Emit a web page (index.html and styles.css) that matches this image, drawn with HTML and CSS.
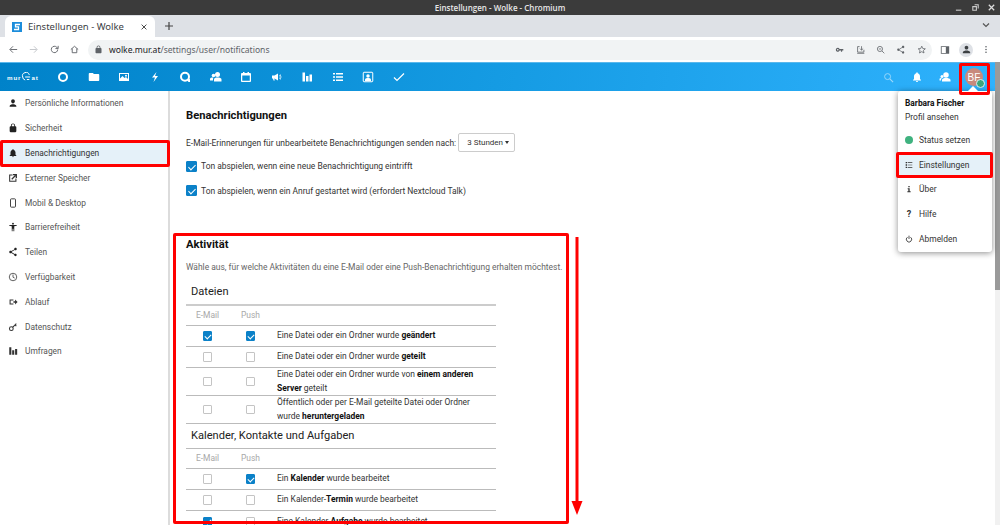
FILE: index.html
```html
<!DOCTYPE html>
<html lang="de">
<head>
<meta charset="utf-8">
<title>Einstellungen - Wolke - Chromium</title>
<link rel="stylesheet" href="styles.css">
</head>
<body>
<div class="window">
  <div class="titlebar">
    <span class="titlebar-text">Einstellungen - Wolke - Chromium</span>
    <div class="winctl">
      <svg viewBox="0 0 10 10"><path d="M1 8h6" stroke="#bbb" stroke-width="1.4"/></svg>
      <svg viewBox="0 0 10 10"><path d="M2 4h4v4H2zM4 2h4v4" fill="none" stroke="#ccc" stroke-width="1.2"/></svg>
      <svg viewBox="0 0 10 10"><path d="M2 2l6 6M8 2l-6 6" stroke="#ddd" stroke-width="1.4"/></svg>
    </div>
  </div>
  <div class="tabstrip">
    <div class="tab">
      <svg class="favicon" viewBox="0 0 10 10"><rect width="10" height="10" fill="#1c8ddb"/><path d="M8 2.500H3.500v2.400h3v2.600H2" fill="none" stroke="#fff" stroke-width="1.300"/></svg>
      <span class="tab-title">Einstellungen - Wolke</span>
      <svg class="tab-close" viewBox="0 0 10 10"><path d="M2 2l6 6M8 2l-6 6" stroke="#444" stroke-width="1.200"/></svg>
    </div>
    <svg class="newtab" viewBox="0 0 10 10"><path d="M5 1v8M1 5h8" stroke="#444" stroke-width="1.200"/></svg>
    <svg class="tabmenu" viewBox="0 0 10 10"><path d="M2 3.500l3 3 3-3" fill="none" stroke="#555" stroke-width="1.200"/></svg>
  </div>
  <div class="toolbar">
    <div class="navbtns">
      <svg viewBox="0 0 24 24"><path d="M20 12H5M11 5l-7 7 7 7" fill="none" stroke="#5f6368" stroke-width="2"/></svg>
      <svg viewBox="0 0 24 24"><path d="M4 12h15M13 5l7 7-7 7" fill="none" stroke="#c0c3c7" stroke-width="2"/></svg>
      <svg viewBox="0 0 24 24"><path d="M19 12a7 7 0 1 1-2-5l2 2M20 4v6h-6" fill="none" stroke="#5f6368" stroke-width="2"/></svg>
      <svg viewBox="0 0 24 24"><path d="M4 12l8-7 8 7M7 10v9h10v-9" fill="none" stroke="#5f6368" stroke-width="2"/></svg>
    </div>
    <div class="omnibox">
      <svg class="lock" viewBox="0 0 24 24"><path fill="#5f6368" d="M18 8h-1V6c0-2.800-2.200-5-5-5S7 3.200 7 6v2H6c-1.100 0-2 .9-2 2v10c0 1.100.9 2 2 2h12c1.100 0 2-.9 2-2V10c0-1.100-.9-2-2-2zM9 6c0-1.700 1.300-3 3-3s3 1.300 3 3v2H9V6z"/></svg>
      <span class="url"><span class="url-host">wolke.mur.at</span>/settings/user/notifications</span>
      <div class="omni-icons">
        <svg viewBox="0 0 24 24"><path fill="#5f6368" d="M7 7a5 5 0 1 0 4.600 7H15v3h3v-3h3v-4h-9.400A5 5 0 0 0 7 7zm0 3a2 2 0 1 1 0 4 2 2 0 0 1 0-4z"/></svg>
        <svg viewBox="0 0 24 24"><path fill="none" stroke="#5f6368" stroke-width="2" d="M9 4H4v14h16v-6M14 3v10M10 9l4 4 4-4M3 21h18"/></svg>
        <svg viewBox="0 0 24 24"><circle cx="10" cy="10" r="6.500" fill="none" stroke="#5f6368" stroke-width="2"/><path d="M15 15l6 6M7 10h6" stroke="#5f6368" stroke-width="2"/></svg>
        <svg viewBox="0 0 24 24"><path fill="#5f6368" d="M18 16.100c-.8 0-1.400.3-2 .8l-7.100-4.200c.1-.2.1-.5.1-.7s0-.5-.1-.7L16 7.100c.5.5 1.200.9 2 .9 1.700 0 3-1.300 3-3s-1.300-3-3-3-3 1.300-3 3c0 .2 0 .5.1.7L8 9.800C7.500 9.300 6.800 9 6 9c-1.700 0-3 1.300-3 3s1.300 3 3 3c.8 0 1.500-.3 2-.8l7.100 4.200c-.1.200-.1.400-.1.600 0 1.600 1.300 2.900 2.900 2.900s2.900-1.300 2.900-2.900-1.200-2.900-2.900-2.900z"/></svg>
        <svg viewBox="0 0 24 24"><path fill="none" stroke="#5f6368" stroke-width="2" d="M12 3l2.700 6 6.300.6-4.800 4.200 1.500 6.400L12 16.800l-5.700 3.400 1.500-6.400L3 9.600 9.300 9z"/></svg>
      </div>
    </div>
    <div class="chrome-right">
      <svg class="panel" viewBox="0 0 24 24"><path fill="#5f6368" fill-rule="evenodd" d="M2 3h20v18H2zm2 2v14h10V5z"/></svg>
      <span class="profile"><svg viewBox="0 0 24 24"><path fill="#3c4043" d="M12 12c2.200 0 4-1.800 4-4s-1.800-4-4-4-4 1.800-4 4 1.800 4 4 4zm0 2c-2.700 0-8 1.300-8 4v2h16v-2c0-2.700-5.300-4-8-4z"/></svg></span>
      <svg class="kebab" viewBox="0 0 10 24"><circle cx="5" cy="5" r="2" fill="#5f6368"/><circle cx="5" cy="12" r="2" fill="#5f6368"/><circle cx="5" cy="19" r="2" fill="#5f6368"/></svg>
    </div>
  </div>
  <div class="page">
    <div class="page-main">
      <header class="appheader">
        <div class="logo"><span>mur</span><svg viewBox="0 0 12 10"><path d="M10 2.500A4 4 0 0 0 2 5a4 4 0 0 0 3 3.600M5 5h6M7 8h3" fill="none" stroke="#fff" stroke-width="1.200"/></svg><span>at</span></div>
        <nav class="appnav">
          <svg viewBox="0 0 24 24"><circle cx="12" cy="12" r="8" fill="none" stroke="#fff" stroke-width="4"/></svg>
          <svg viewBox="0 0 24 24"><path fill="#fff" d="M10 4H3c-1 0-1.500.9-1.500 2v12c0 1.100.9 2 2 2h17c1.100 0 2-.9 2-2V8c0-1.100-.9-2-2-2h-9z"/></svg>
          <svg viewBox="0 0 24 24"><path fill="#fff" fill-rule="evenodd" d="M2 4h20v16H2zm2 2v9l5-5 4 4 3-2 4 4V6zm12 1.500a2 2 0 1 1 0 4 2 2 0 0 1 0-4z"/></svg>
          <svg viewBox="0 0 24 24"><path fill="#fff" d="M15 2L6 13h6l-3 9 9-12h-6l3-8z"/></svg>
          <svg viewBox="0 0 24 24"><circle cx="12" cy="11.500" r="8" fill="none" stroke="#fff" stroke-width="4"/><path fill="#fff" d="M15 17l7-1v6h-3z"/></svg>
          <svg viewBox="0 0 24 24"><circle cx="15" cy="7" r="5" fill="#fff"/><circle cx="7" cy="9" r="3.600" fill="#fff"/><path fill="#fff" d="M8 21v-4c0-3 3-4 7-4s8 1 8 4v4zM0 19v-3c0-2.400 3-3 6-3l1 1c-1 .6-1 2-1 5z"/></svg>
          <svg viewBox="0 0 24 24"><path fill="#fff" fill-rule="evenodd" d="M6 2h3v2h6V2h3v2h2c1 0 2 1 2 2v14c0 1-1 2-2 2H4c-1 0-2-1-2-2V6c0-1 1-2 2-2h2zM4.500 9v10.500h15V9z"/></svg>
          <svg viewBox="0 0 24 24"><path fill="#fff" d="M2 9h5l7-4v14l-7-4H6.500l1 4H5l-1-4H2zM17 8l3-1v2l-3 1zM17 11h4v2h-4zM17 14l3 1v2l-3-1z"/></svg>
          <svg viewBox="0 0 24 24"><path fill="#fff" d="M3 3h5v18H3zM10 10h5v11h-5zM17 7h5v14h-5z"/></svg>
          <svg viewBox="0 0 24 24"><path fill="#fff" d="M2 4h4v3H2zM8 4h14v3H8zM2 10.500h4v3H2zM8 10.500h14v3H8zM2 17h4v3H2zM8 17h14v3H8z"/></svg>
          <svg viewBox="0 0 24 24"><path fill="none" stroke="#fff" stroke-width="2" d="M4 2.500h16c1 0 1.500.5 1.500 1.500v16c0 1-.5 1.500-1.500 1.500H4c-1 0-1.500-.5-1.500-1.500V4c0-1 .5-1.500 1.500-1.500z"/><circle cx="12" cy="10" r="3.500" fill="#fff"/><path fill="#fff" d="M6 20v-3c0-2 3-3 6-3s6 1 6 3v3z"/></svg>
          <svg viewBox="0 0 24 24"><path fill="none" stroke="#fff" stroke-width="2.400" d="M2 13l6 6L22 5"/></svg>
        </nav>
        <div class="appnav-right">
          <svg class="dim" viewBox="0 0 24 24"><circle cx="10" cy="10" r="6.500" fill="none" stroke="#fff" stroke-width="2"/><path d="M15 15l7 7" stroke="#fff" stroke-width="2.500"/></svg>
          <svg class="bell" viewBox="0 0 24 24"><path fill="#fff" d="M12 22c1.100 0 2-.9 2-2h-4c0 1.100.9 2 2 2zm6-6v-5c0-3.100-1.600-5.600-4.500-6.300V4c0-.8-.7-1.500-1.500-1.500s-1.500.7-1.500 1.500v.7C7.600 5.400 6 7.900 6 11v5l-2 2v1h16v-1l-2-2z"/></svg>
          <svg class="people" viewBox="0 0 24 24"><circle cx="14" cy="8" r="5.500" fill="#fff"/><circle cx="6" cy="11" r="3" fill="#fff"/><path fill="#fff" d="M6 21v-3c0-3 4-4 8-4s9 1 9 4v3zM1 19v-3c0-1.500 2-2 5-2-1.500 1-2 2.500-2 5z"/></svg>
          <div class="avatar">BF<span class="avatar-status"></span></div>
        </div>
      </header>
      <div class="appbody">
        <aside class="sidebar">
          <a class="side-item"><svg viewBox="0 0 24 24"><path fill="#222" d="M12 13c2.500 0 4.500-2.200 4.500-5S14.500 3 12 3 7.500 5.200 7.500 8s2 5 4.500 5zm0 2c-3 0-8 1.300-8 4v2h16v-2c0-2.700-5-4-8-4z"/></svg>Persönliche Informationen</a>
          <a class="side-item"><svg viewBox="0 0 24 24"><path fill="#222" d="M18 8h-1V6c0-2.800-2.200-5-5-5S7 3.200 7 6v2H6c-1.100 0-2 .9-2 2v10c0 1.100.9 2 2 2h12c1.100 0 2-.9 2-2V10c0-1.100-.9-2-2-2zM9 6c0-1.700 1.300-3 3-3s3 1.300 3 3v2H9V6z"/></svg>Sicherheit</a>
          <a class="side-item active"><svg viewBox="0 0 24 24"><path fill="#222" d="M12 22c1.100 0 2-.9 2-2h-4c0 1.100.9 2 2 2zm6-6v-5c0-3.100-1.600-5.600-4.500-6.300V4c0-.8-.7-1.500-1.500-1.500s-1.500.7-1.500 1.500v.7C7.600 5.400 6 7.900 6 11v5l-2 2v1h16v-1l-2-2z"/></svg>Benachrichtigungen</a>
          <a class="side-item"><svg viewBox="0 0 24 24"><path fill="none" stroke="#333" stroke-width="2.500" d="M11 5H4v15h15v-7"/><path fill="none" stroke="#333" stroke-width="3" d="M9 15l9-9M12 4h8v8"/></svg>Externer Speicher</a>
          <a class="side-item"><svg viewBox="0 0 24 24"><rect x="6" y="2" width="12" height="20" rx="2" fill="none" stroke="#333" stroke-width="2.200"/></svg>Mobil &amp; Desktop</a>
          <a class="side-item"><svg viewBox="0 0 24 24"><circle cx="12" cy="4" r="2.200" fill="#222"/><path fill="#222" d="M3 7h18v2l-6 1v12h-2v-6h-2v6H9V10L3 9z"/></svg>Barrierefreiheit</a>
          <a class="side-item"><svg viewBox="0 0 24 24"><path fill="#222" d="M18 16.100c-.8 0-1.400.3-2 .8l-7.100-4.200c.1-.2.1-.5.1-.7s0-.5-.1-.7L16 7.100c.5.5 1.200.9 2 .9 1.700 0 3-1.300 3-3s-1.300-3-3-3-3 1.300-3 3c0 .2 0 .5.1.7L8 9.800C7.500 9.300 6.800 9 6 9c-1.700 0-3 1.300-3 3s1.300 3 3 3c.8 0 1.500-.3 2-.8l7.100 4.200c-.1.200-.1.400-.1.600 0 1.600 1.300 2.900 2.900 2.900s2.900-1.300 2.900-2.900-1.200-2.900-2.900-2.900z"/></svg>Teilen</a>
          <a class="side-item"><svg viewBox="0 0 24 24"><circle cx="12" cy="12" r="9" fill="none" stroke="#444" stroke-width="2"/><path d="M12 6v6.500l4 2" fill="none" stroke="#444" stroke-width="2"/></svg>Verfügbarkeit</a>
          <a class="side-item"><svg viewBox="0 0 24 24"><path fill="none" stroke="#333" stroke-width="2.500" d="M13 7H5v10h8"/><path fill="#333" d="M13 10h4V6l6 6-6 6v-4h-4z"/></svg>Ablauf</a>
          <a class="side-item"><svg viewBox="0 0 24 24"><circle cx="8" cy="16" r="4.500" fill="none" stroke="#333" stroke-width="2.500"/><path d="M11 13l9-9M17 7l3 3" fill="none" stroke="#333" stroke-width="2.500"/></svg>Datenschutz</a>
          <a class="side-item"><svg viewBox="0 0 24 24"><path fill="#333" d="M3 3h5v18H3zM10 10h5v11h-5zM17 7h5v14h-5z"/></svg>Umfragen</a>
        </aside>
        <main class="content">
          <section class="section-top">
            <h2>Benachrichtigungen</h2>
            <div class="reminder">
              <span>E-Mail-Erinnerungen für unbearbeitete Benachrichtigungen senden nach:</span>
              <span class="select">3 Stunden<i class="caret"></i></span>
            </div>
            <label class="check-row"><span class="cb on"></span>Ton abspielen, wenn eine neue Benachrichtigung eintrifft</label>
            <label class="check-row"><span class="cb on"></span>Ton abspielen, wenn ein Anruf gestartet wird (erfordert Nextcloud Talk)</label>
          </section>
          <section class="section-activity">
            <h2>Aktivität</h2>
            <p class="hint">Wähle aus, für welche Aktivitäten du eine E-Mail oder eine Push-Benachrichtigung erhalten möchtest.</p>
            <table class="activity">
              <colgroup><col class="c-mail"><col class="c-push"><col></colgroup>
              <tr class="group first"><th colspan="3">Dateien</th></tr>
              <tr class="head"><td>E-Mail</td><td>Push</td><td></td></tr>
              <tr><td><span class="cb on"></span></td><td><span class="cb on"></span></td><td>Eine Datei oder ein Ordner wurde <b>geändert</b></td></tr>
              <tr><td><span class="cb"></span></td><td><span class="cb"></span></td><td>Eine Datei oder ein Ordner wurde <b>geteilt</b></td></tr>
              <tr class="tall"><td><span class="cb"></span></td><td><span class="cb"></span></td><td><span class="ln">Eine Datei oder ein Ordner wurde von <b>einem anderen</b></span><span class="ln"><b>Server</b> geteilt</span></td></tr>
              <tr class="tall"><td><span class="cb"></span></td><td><span class="cb"></span></td><td><span class="ln">Öffentlich oder per E-Mail geteilte Datei oder Ordner</span><span class="ln">wurde <b>heruntergeladen</b></span></td></tr>
              <tr class="group"><th colspan="3">Kalender, Kontakte und Aufgaben</th></tr>
              <tr class="head"><td>E-Mail</td><td>Push</td><td></td></tr>
              <tr><td><span class="cb"></span></td><td><span class="cb on"></span></td><td>Ein <b>Kalender</b> wurde bearbeitet</td></tr>
              <tr><td><span class="cb"></span></td><td><span class="cb"></span></td><td>Ein Kalender-<b>Termin</b> wurde bearbeitet</td></tr>
              <tr><td><span class="cb on"></span></td><td><span class="cb"></span></td><td>Eine Kalender-<b>Aufgabe</b> wurde bearbeitet</td></tr>
            </table>
          </section>
        </main>
      </div>
    </div>
    <div class="scrollbar"><div class="thumb"></div></div>
  </div>

  <div class="menu">
    <span class="menu-arrow"></span>
    <div class="menu-profile"><strong>Barbara Fischer</strong><span>Profil ansehen</span></div>
    <a class="menu-item"><span class="status-dot"></span>Status setzen</a>
    <a class="menu-item active"><svg viewBox="0 0 24 24"><path fill="#333" d="M2 3h4v4H2zM8 4h14v2H8zM2 10h4v4H2zM8 11h14v2H8zM2 17h4v4H2zM8 18h14v2H8z"/></svg>Einstellungen</a>
    <a class="menu-item"><svg viewBox="0 0 24 24"><path fill="#333" d="M10 3h4v4h-4zM8 10h6v9h3v3H7v-3h3v-6H8z"/></svg>Über</a>
    <a class="menu-item"><span class="qmark">?</span>Hilfe</a>
    <a class="menu-item"><svg viewBox="0 0 24 24"><path fill="none" stroke="#333" stroke-width="2.500" d="M7.500 6.500a8 8 0 1 0 9 0M12 2v10"/></svg>Abmelden</a>
  </div>

  <span class="mark mark-side"></span>
  <span class="mark mark-avatar"></span>
  <span class="mark mark-menu"></span>
  <span class="mark mark-activity"></span>
  <svg class="mark-arrow" viewBox="0 0 12 278"><path d="M6 0v266" stroke="#f00" stroke-width="3"/><path d="M0.500 264h11L6 278z" fill="#f00"/></svg>
</div>
</body>
</html>
```

FILE: styles.css
```css
* { box-sizing: border-box; }
html, body { margin: 0; padding: 0; height: 100%; overflow: hidden; background: #fff; }
body { font-family: Roboto, "Liberation Sans", sans-serif; font-size: 8.450px; color: #222; }
svg { display: block; flex: none; }

.window { position: relative; width: 1000px; height: 525px; display: flex; flex-direction: column; overflow: hidden; }

.titlebar { height: 15px; background: #3b3b3b; display: flex; align-items: center; justify-content: center; position: relative; flex: none; }
.titlebar-text { font-family: "Open Sans", "Noto Sans", sans-serif; font-size: 8px; font-weight: 600; color: #e8e8e8; }
.winctl { position: absolute; right: 4px; top: 3px; display: flex; gap: 7px; }
.winctl svg { width: 9px; height: 9px; }

.tabstrip { height: 22px; background: #dee1e6; display: flex; align-items: flex-end; padding-left: 5px; position: relative; flex: none; }
.tab { width: 150px; height: 21px; background: #fff; border-radius: 6px 6px 0 0; display: flex; align-items: center; padding: 0 7px; }
.favicon { width: 10px; height: 10px; margin-right: 6px; }
.tab-title { flex: 1; font-family: "Noto Sans", sans-serif; font-size: 9.500px; color: #3c4043; white-space: nowrap; }
.tab-close { width: 8px; height: 8px; }
.newtab { width: 10px; height: 10px; margin: 0 0 6px 9px; }
.tabmenu { position: absolute; right: 9px; top: 5px; width: 10px; height: 10px; }

.toolbar { height: 25px; background: #fff; display: flex; align-items: center; flex: none; }
.navbtns { width: 88px; display: flex; gap: 9.300px; padding-left: 8px; flex: none; }
.navbtns svg { width: 11px; height: 11px; }
.omnibox { width: 844px; height: 20px; border-radius: 10px; background: #f1f3f4; display: flex; align-items: center; padding: 0 6px 0 5.500px; flex: none; }
.lock { width: 9px; height: 9px; margin-right: 6.500px; flex: none; }
.url { font-family: "Noto Sans", sans-serif; font-size: 8.570px; color: #5f6368; flex: 1; }
.url-host { color: #202124; }
.omni-icons { display: flex; gap: 10.800px; }
.omni-icons svg { width: 9.500px; height: 9.500px; }
.chrome-right { flex: 1; display: flex; align-items: center; padding-left: 8px; }
.panel { width: 10px; height: 10px; margin-right: 9px; }
.profile { width: 14px; height: 14px; border-radius: 50%; background: #dee1e6; display: flex; align-items: center; justify-content: center; margin-right: 11px; }
.profile svg { width: 11px; height: 11px; }
.kebab { width: 4px; height: 11px; }

.page { flex: 1; display: flex; min-height: 0; }
.page-main { flex: 1; min-width: 0; display: flex; flex-direction: column; }

.appheader { height: 29px; border-top: 1px solid #5bb8ec; background: linear-gradient(100deg, #0082c9 0%, #159be3 50%, #2fb2fd 100%); display: flex; align-items: center; padding-left: 7px; flex: none; }
.logo { width: 41px; display: flex; align-items: center; gap: 0; font-family: "Liberation Sans", sans-serif; font-size: 6.200px; font-weight: 700; letter-spacing: .9px; color: #fff; flex: none; }
.logo svg { width: 10px; height: 10px; }
.appnav { display: flex; width: 380px; flex: none; }
.appnav svg { width: 12px; height: 12px; margin: 0 9.250px; }
.appnav-right { margin-left: auto; display: flex; align-items: center; padding-right: 12px; }
.appnav-right svg { width: 11px; height: 11px; margin-right: 17.500px; }
.appnav-right svg.dim { opacity: .55; }
.appnav-right svg.bell { width: 12px; height: 12px; margin-right: 16px; }
.appnav-right svg.people { width: 12px; height: 12px; margin-right: 14px; }
.avatar { position: relative; width: 18px; height: 18px; border-radius: 50%; background: #c88a7d; color: #fff; font-family: "Liberation Sans", sans-serif; font-size: 10px; display: flex; align-items: center; justify-content: center; }
.avatar-status { position: absolute; right: -2px; bottom: -2px; width: 9px; height: 9px; border-radius: 50%; background: #3ba67a; border: 1px solid #dff1f5; }

.appbody { flex: 1; display: flex; min-height: 0; }
.sidebar { width: 170px; flex: none; border-right: 2px solid #dcdcdc; display: flex; flex-direction: column; }
.side-item { height: 24.800px; display: flex; align-items: center; color: #555; padding-left: 8px; flex: none; font-size: 8.400px; }
.side-item svg { width: 10px; height: 10px; margin-right: 7px; }
.side-item.active { background: #e5f1f9; color: #333; }

.content { flex: 1; padding: 0 16px; min-width: 0; overflow: hidden; }
h2 { margin: 0; font-size: 11.200px; font-weight: 700; color: #111; line-height: 14px; }
.section-top { padding-top: 18px; height: 147px; }
.reminder { display: flex; align-items: center; gap: 2px; margin-top: 10px; height: 19px; color: #333; }
.select { width: 57px; height: 19px; border: 1px solid #ccc; border-radius: 2px; font-size: 8px; display: flex; align-items: center; justify-content: space-between; padding: 0 5px 0 8px; color: #333; }
.caret { width: 0; height: 0; border: 2.500px solid transparent; border-top: 3px solid #333; border-bottom: 0; }
.reminder + .check-row { margin-top: 2px; }
.check-row { display: flex; align-items: center; height: 24.500px; color: #333; }
.check-row .cb { margin-right: 4px; }

.cb { display: inline-block; width: 9.500px; height: 9.500px; border: 1px solid #c4c4c4; border-radius: 1px; background: #fff; position: relative; vertical-align: middle; }
.cb.on { background: #0b81c8; border-color: #0b81c8; }
.cb.on::after { content: ""; position: absolute; left: 2.200px; top: .8px; width: 3px; height: 5px; border: solid #fff; border-width: 0 1.300px 1.300px 0; transform: rotate(45deg); }
.check-row .cb { width: 11px; height: 11px; }
.check-row .cb.on::after { left: 3px; top: 1px; width: 3px; height: 6px; }

.hint { margin: 9px 0 0; color: #666; line-height: 12px; white-space: nowrap; }
.activity { width: 310px; border-collapse: collapse; table-layout: fixed; margin-top: 5px; }
.c-mail { width: 43px; }
.c-push { width: 43px; }
.activity td { border-top: 1px solid #bbb; padding: 0; height: 21px; text-align: center; color: #333; line-height: 13.500px; }
.activity td:last-child { text-align: left; padding-left: 5px; }
.activity tr.head td { color: #a8a8a8; height: 20.500px; }
.activity tr.tall td { height: 27.500px; }
.ln { display: block; white-space: nowrap; }
.activity tr.group th { font-size: 11.100px; font-weight: 400; color: #222; text-align: left; padding: 0 0 0 5px; height: 24.500px; border-top: 1px solid #bbb; }
.activity tr.group.first th { border-top: 0; height: 27px; border-bottom: 2px solid #ccc; }
.activity b { color: #111; }

.scrollbar { width: 5px; background: #f1f1f1; flex: none; }
.thumb { height: 228px; background: #9a9a9a; }

.menu { position: absolute; left: 898px; top: 91px; width: 94px; height: 161px; background: #fff; border-radius: 3px; box-shadow: 0 1px 6px rgba(0,0,0,.45); color: #333; }
.menu-arrow { position: absolute; left: 70px; top: -5px; width: 0; height: 0; border: 5px solid transparent; border-top: 0; border-bottom: 5px solid #fff; }
.menu-profile { display: flex; flex-direction: column; padding: 5px 7px 0; height: 36.500px; line-height: 14px; }
.menu-profile strong { color: #111; font-size: 8.400px; }
.menu-item { height: 24.800px; display: flex; align-items: center; padding-left: 7px; }
.menu-item svg { width: 8px; height: 8px; margin-right: 6px; flex: none; }
.menu-item.active { background: #e5f1f9; }
.status-dot { width: 8px; height: 8px; border-radius: 50%; background: #3fb27f; margin-right: 6px; flex: none; }
.qmark { width: 8px; margin-right: 6px; text-align: center; font-weight: 700; font-size: 9px; flex: none; }

.mark { position: absolute; border: 3px solid #f00; border-radius: 2px; pointer-events: none; }
.mark-side { left: 0; top: 140px; width: 170px; height: 27px; }
.mark-avatar { left: 959px; top: 63px; width: 31px; height: 32px; }
.mark-menu { left: 896px; top: 152px; width: 97px; height: 26px; }
.mark-activity { left: 173px; top: 233px; width: 396px; height: 291px; }
.mark-arrow { position: absolute; left: 571px; top: 237px; width: 12px; height: 278px; }
```
